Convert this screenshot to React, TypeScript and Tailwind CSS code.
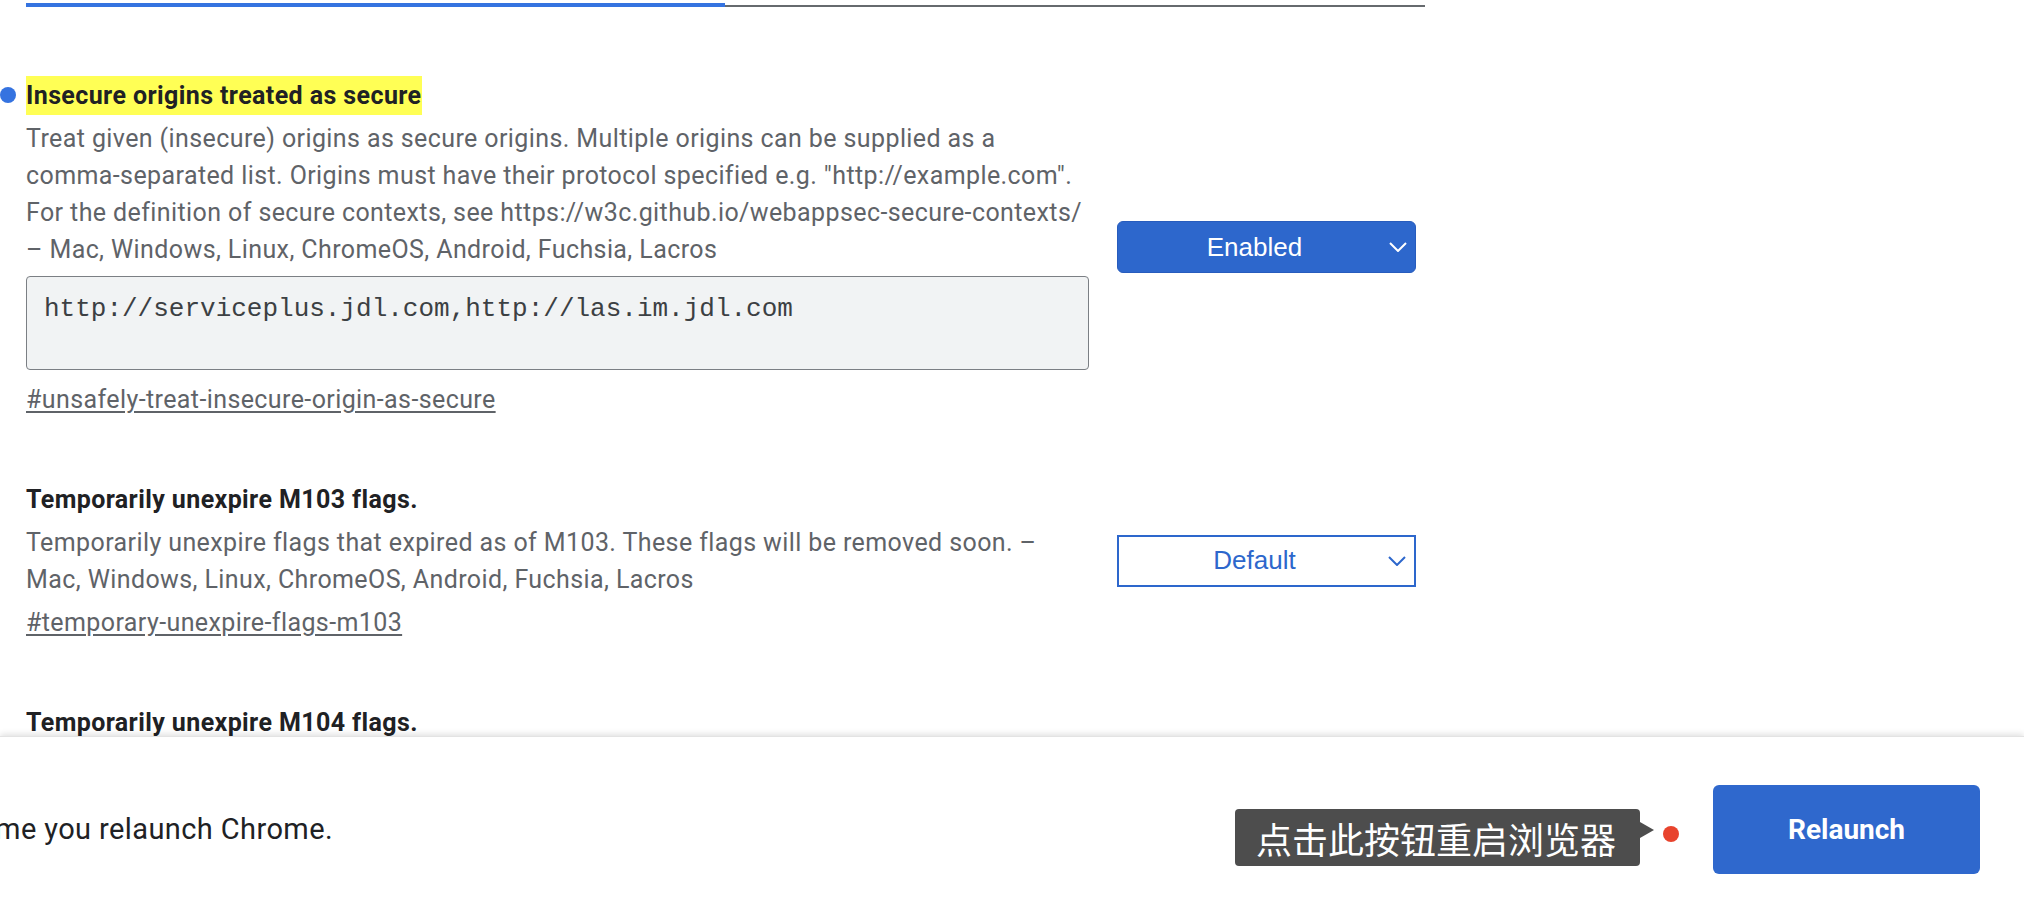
import React from "react";

function Chevron({ color }: { color: string }) {
  return (
    <svg width="18" height="10" viewBox="0 0 18 10" fill="none">
      <polyline points="1,1 9,9 17,1" stroke={color} strokeWidth="2" fill="none" />
    </svg>
  );
}

export default function App() {
  return (
    <div className="w-full h-[914px] overflow-hidden bg-white flex flex-col [font-family:Roboto,'Noto_Sans',sans-serif]">
      <div className="h-[736px] shrink-0 overflow-hidden pl-[26px]">
        <div className="mt-[3px] flex items-end w-[1399px]">
          <div className="w-[699px] h-[4px] bg-[#3573e0]" />
          <div className="flex-1 h-[2px] bg-[#666a6e]" />
        </div>

        {/* Experiment 1 */}
        <div className="mt-[69px] flex items-center gap-[28px]">
          <div className="w-[1063px] relative">
            <div className="absolute left-[-26px] top-[11px] w-[16px] h-[16px] rounded-full bg-[#3573e0]" />
            <div className="h-[39px] flex items-center">
              <span className="bg-[#ffff55] text-[#202124] font-bold text-[25px] tracking-[0.4px] leading-[39px]">
                Insecure origins treated as secure
              </span>
            </div>
            <div className="mt-[5px] text-[25px] tracking-[0.4px] leading-[37px] text-[#5f6368]">
              Treat given (insecure) origins as secure origins. Multiple origins can be supplied as a
              <br />
              comma-separated list. Origins must have their protocol specified e.g. "http://example.com".
              <br />
              For the definition of secure contexts, see https://w3c.github.io/webappsec-secure-contexts/
              <br />– Mac, Windows, Linux, ChromeOS, Android, Fuchsia, Lacros
            </div>
            <div className="mt-[8px] h-[94px] rounded-[4px] border border-[#7b7f84] bg-[#f1f3f4] pl-[17px] pt-[17px] text-[26px] leading-[30px] text-[#3c4043] [font-family:'Liberation_Mono',monospace]">
              http://serviceplus.jdl.com,http://las.im.jdl.com
            </div>
            <div className="mt-[12px] text-[25px] tracking-[0.4px] leading-[36px] text-[#5f6368] underline underline-offset-[3px]">
              #unsafely-treat-insecure-origin-as-secure
            </div>
          </div>
          <div className="w-[299px] h-[52px] rounded-[6px] bg-[#2d67cc] border border-[#275cbd] flex items-center [font-family:'Liberation_Sans',Arial,sans-serif]">
            <span className="flex-1 text-center pl-[2px] text-white text-[26px]">Enabled</span>
            <span className="pr-[8px] flex items-center">
              <Chevron color="#ffffff" />
            </span>
          </div>
        </div>

        {/* Experiment 2 */}
        <div className="mt-[62px] flex items-center gap-[28px]">
          <div className="w-[1063px]">
            <div className="h-[39px] flex items-center text-[#202124] font-bold text-[25px] tracking-[0.4px]">
              Temporarily unexpire M103 flags.
            </div>
            <div className="mt-[5px] text-[25px] tracking-[0.4px] leading-[37px] text-[#5f6368]">
              Temporarily unexpire flags that expired as of M103. These flags will be removed soon. –
              <br />
              Mac, Windows, Linux, ChromeOS, Android, Fuchsia, Lacros
            </div>
            <div className="mt-[7px] text-[25px] tracking-[0.4px] leading-[36px] text-[#5f6368] underline underline-offset-[3px]">
              #temporary-unexpire-flags-m103
            </div>
          </div>
          <div className="w-[299px] h-[52px] bg-white border-2 border-[#2d67cc] flex items-center [font-family:'Liberation_Sans',Arial,sans-serif]">
            <span className="flex-1 text-center pl-[2px] text-[#2d67cc] text-[26px]">Default</span>
            <span className="pr-[8px] flex items-center">
              <Chevron color="#2d67cc" />
            </span>
          </div>
        </div>

        {/* Experiment 3 */}
        <div className="mt-[62px] flex items-center gap-[28px]">
          <div className="w-[1063px]">
            <div className="h-[39px] flex items-center text-[#202124] font-bold text-[25px] tracking-[0.4px]">
              Temporarily unexpire M104 flags.
            </div>
          </div>
        </div>
      </div>

      <div className="relative h-[178px] shrink-0 bg-white shadow-[0_-2px_6px_rgba(0,0,0,0.12)] border-t border-[#e3e3e3] flex items-start">
        <div className="mt-[74px] w-[333px] overflow-hidden flex justify-end">
          <span className="whitespace-nowrap text-[29px] tracking-[0.4px] leading-[36px] text-[#202124]">
            Your changes will take effect the next time you relaunch Chrome.
          </span>
        </div>
        <div className="ml-auto flex items-start pr-[44px]">
          <div className="mt-[72px] relative w-[405px] h-[57px] rounded-[4px] bg-[#4d4d4d] flex items-center pl-[21px] text-white text-[36px] leading-[40px] [font-family:'Noto_Sans_CJK_SC',sans-serif]">
            点击此按钮重启浏览器
            <div className="absolute right-[-14px] top-[13px] w-0 h-0 border-y-[8px] border-y-transparent border-l-[14px] border-l-[#4d4d4d]" />
          </div>
          <div className="mt-[89px] ml-[23px] w-[16px] h-[16px] rounded-full bg-[#e8432d]" />
          <div className="mt-[48px] ml-[34px] w-[267px] h-[89px] rounded-[6px] bg-[#2f68cd] flex items-center justify-center text-white font-bold text-[28px]">
            Relaunch
          </div>
        </div>
      </div>
    </div>
  );
}
